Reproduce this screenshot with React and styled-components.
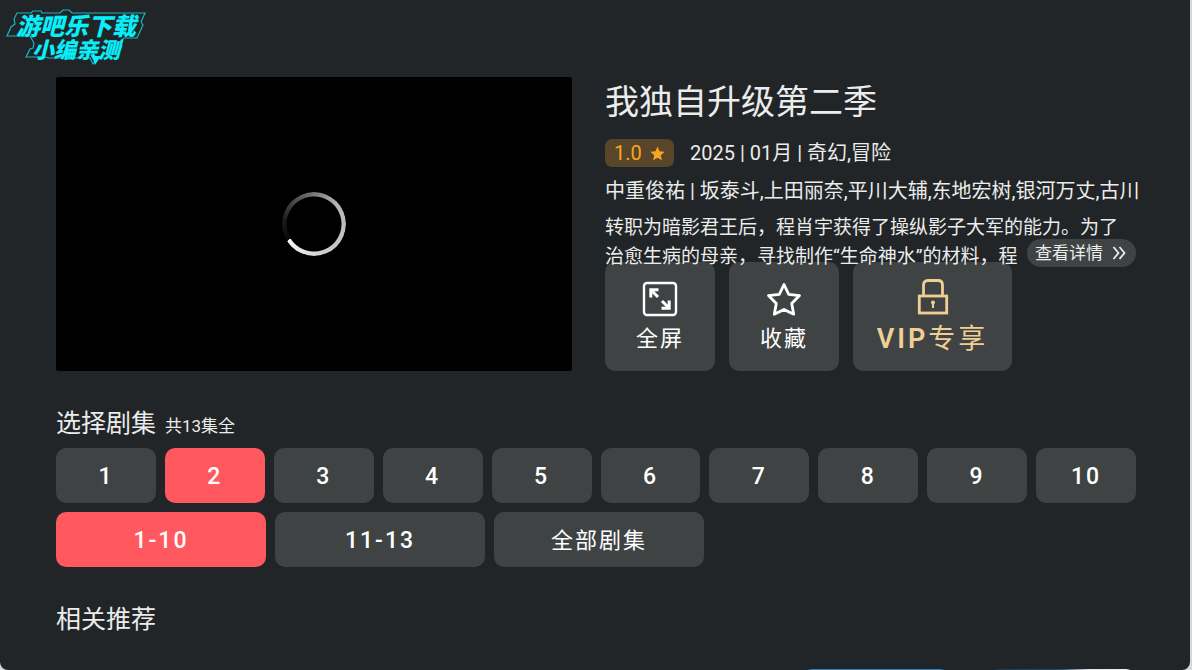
import React, { useState } from "react";
import styled, { createGlobalStyle, css } from "styled-components";

const GlobalStyle = createGlobalStyle`
  *, *::before, *::after { box-sizing: border-box; }
  body {
    margin: 0;
    background: #d5d8da;
    color: #ececec;
    font-family: Roboto, "Noto Sans CJK SC", sans-serif;
  }
  h1, h2, p { margin: 0; font-weight: 400; }
  button { font: inherit; color: inherit; border: 0; padding: 0; cursor: pointer; }
`;

const Screen = styled.main`
  position: relative;
  height: 100vh;
  margin-right: 2px;
  padding: 77px 54px 0 56px;
  overflow: auto;
  scrollbar-width: none;
  background: #212527;
  border-radius: 0 0 8px 8px;
`;

const Watermark = styled.div`
  position: absolute;
  top: 8px;
  left: 4px;
  width: 144px;
  height: 60px;
  padding-top: 5px;
  color: #08effa;
  font-family: "Noto Sans CJK SC", sans-serif;
  font-style: italic;
  font-weight: 900;
  text-align: center;
`;

const WatermarkFrame = styled.svg`
  position: absolute;
  inset: 0;
`;

const WatermarkLine = styled.div`
  position: relative;
  font-size: ${(p) => (p.$small ? 22 : 24)}px;
  line-height: ${(p) => (p.$small ? 22 : 24)}px;
`;

const Hero = styled.section`
  display: grid;
  grid-template-columns: minmax(0, 516fr) minmax(0, 531fr);
  gap: 33px;
`;

const Player = styled.div`
  display: grid;
  place-items: center;
  align-self: start;
  aspect-ratio: 516 / 294;
  background: #000;
  border-radius: 2px;
`;

const Spinner = styled.div`
  width: 64px;
  height: 64px;
  border-radius: 50%;
  background: conic-gradient(
    from 238deg,
    #080808 0deg,
    #1c1c1c 40deg,
    #6a6a6a 110deg,
    #b4b4b4 170deg,
    #cccccc 280deg,
    #f6f6f6 360deg
  );
  mask: radial-gradient(circle, transparent 27px, #000 28px);
`;

const Title = styled.h1`
  font-size: 34px;
  line-height: 50px;
  white-space: nowrap;
`;

const Meta = styled.div`
  display: flex;
  align-items: center;
  gap: 16px;
  margin-top: 12px;
  font-size: 20px;
  line-height: 28px;
`;

const Rating = styled.span`
  display: flex;
  align-items: center;
  justify-content: center;
  gap: 8px;
  width: 69px;
  height: 28px;
  border-radius: 7px;
  background: #58452a;
  color: #f8a523;
`;

const Cast = styled.p`
  margin-top: 10px;
  font-size: 20px;
  line-height: 28px;
  white-space: nowrap;
`;

const Summary = styled.div`
  position: relative;
  z-index: 1;
  margin-top: 8px;
`;

const SummaryText = styled.p`
  height: 58px;
  overflow: hidden;
  font-size: 19px;
  line-height: 29px;
`;

const DetailButton = styled.button`
  position: absolute;
  right: 0;
  bottom: 4px;
  display: flex;
  align-items: center;
  justify-content: center;
  gap: 9px;
  width: 109px;
  height: 28px;
  padding-right: 2px;
  border-radius: 14px;
  background: #404344;
  && { font-size: 17px; line-height: 28px; }
`;

const Actions = styled.div`
  display: flex;
  gap: 14px;
  margin-top: -9px;
`;

const ActionButton = styled.button`
  display: flex;
  flex-direction: column;
  align-items: center;
  gap: 2px;
  width: ${(p) => (p.$vip ? 159 : 110)}px;
  height: 109px;
  padding-top: ${(p) => (p.$vip ? 16 : 19)}px;
  border-radius: 10px;
  background: #404344;
  && {
    color: ${(p) => (p.$vip ? "#f0cf94" : "#fff")};
    font-size: ${(p) => (p.$vip ? 27 : 22)}px;
    line-height: 40px;
    letter-spacing: ${(p) => (p.$vip ? 3 : 2)}px;
  }
`;

const Latin = styled.span`
  font-weight: 600;
`;

const SectionHead = styled.div`
  display: flex;
  align-items: baseline;
  gap: 9px;
  margin-top: 35px;
  line-height: 36px;
`;

const SectionTitle = styled.h2`
  font-size: 25px;
`;

const Count = styled.span`
  font-size: 17px;
`;

const Episodes = styled.div`
  display: grid;
  grid-template-columns: repeat(10, minmax(0, 1fr));
  gap: 9px;
  margin-top: 4px;
`;

const Ranges = styled.div`
  display: flex;
  gap: 9px;
  margin-top: 9px;
`;

const choice = css`
  height: 55px;
  border-radius: 10px;
  background: ${(p) => (p.$active ? "#ff585f" : "#404344")};
  && {
    padding-top: 2px;
    color: #fff;
    font-size: ${(p) => (p.$wide ? 22 : 23)}px;
    font-weight: ${(p) => (p.$wide ? 400 : 500)};
    line-height: 50px;
    letter-spacing: 2px;
  }
`;

const EpisodeButton = styled.button`
  ${choice}
`;

const RangeButton = styled.button`
  ${choice}
  width: 210px;
`;

const Posters = styled.div`
  display: grid;
  grid-template-columns: repeat(6, minmax(0, 1fr));
  gap: 39px;
  margin-top: 31px;
`;

const Poster = styled.div`
  height: 200px;
  border-radius: 10px;
  background: ${(p) => p.$fill};
`;

const FullscreenIcon = () => (
  <svg width="36" height="36" viewBox="0 0 36 36" fill="none" stroke="currentColor" strokeWidth="2.4" aria-hidden="true">
    <rect x="2" y="2" width="32" height="32" rx="3" />
    <path d="M16 16 9 9M8.800 16.500V8.800H16.500" strokeWidth="3" />
    <path d="m20 20 7 7M27.200 19.500v7.700H19.500" strokeWidth="3" />
  </svg>
);

const FavoriteIcon = () => (
  <svg width="36" height="36" viewBox="0 0 36 36" fill="none" stroke="currentColor" strokeWidth="2.8" strokeLinejoin="round" aria-hidden="true">
    <path d="m18 3.500 4.700 9.800 10.800 1.300-7.800 7.800 2 10.800-9.700-4.800-9.700 4.800 2-10.800-7.800-7.800 10.800-1.300Z" />
  </svg>
);

const LockIcon = () => (
  <svg width="36" height="39" viewBox="0 0 36 39" fill="none" stroke="currentColor" strokeWidth="2.8" aria-hidden="true">
    <path d="M8.500 18V7q0-4.500 4.500-4.500h10q4.500 0 4.500 4.500v11" />
    <rect x="4.300" y="18" width="27.400" height="17" />
    <circle cx="18" cy="24.500" r="2" fill="currentColor" stroke="none" />
    <path d="M18 24v6" strokeWidth="2" />
  </svg>
);

const ChevronsIcon = () => (
  <svg width="14" height="14" viewBox="0 0 14 14" fill="none" stroke="currentColor" strokeWidth="1.800" aria-hidden="true">
    <path d="m1.500 1 5 6-5 6M7.500 1l5 6-5 6" />
  </svg>
);

const StarIcon = () => (
  <svg width="15" height="15" viewBox="0 0 24 24" fill="currentColor" aria-hidden="true">
    <path d="m12 .8 3.300 7.600 8.200.8-6.200 5.500 1.800 8.200-7.100-4.300-7.100 4.300 1.800-8.200L.5 9.200l8.200-.8Z" />
  </svg>
);

const EPISODES = Array.from({ length: 10 }, (_, i) => i + 1);
const RANGES = [
  { label: "1-10" },
  { label: "11-13" },
  { label: "全部剧集", wide: true },
];
const POSTERS = [
  "#212527",
  "#212527",
  "#212527",
  "#212527",
  "#2d7fbd",
  "linear-gradient(90deg, #1c3a52 0%, #2a5070 50%, #e4e4e4 68%, #f2f2f2 100%)",
];

export default function App() {
  const [episode, setEpisode] = useState(2);
  const [range, setRange] = useState("1-10");

  return (
    <>
      <GlobalStyle />
      <Screen>
        <Watermark>
          <WatermarkFrame width="144" height="60" viewBox="0 0 144 60" fill="none" stroke="#18b4c6" strokeWidth="1.2" aria-hidden="true">
            <path d="M13 5h14l2-2h8l1 2h18l3-3h6l3 3h73l-4 9 2 3-6 13h-13l-4 4 2 4-6 12h-18l-5 6-3-6H44l-2-1H22l4-8 3-1 1-5-4-7H3l4-9 4-3-1-5Z" />
            <path d="M88 48l3 9 6-9Z" fill="#08effa" stroke="none" />
          </WatermarkFrame>
          <WatermarkLine>游吧乐下载</WatermarkLine>
          <WatermarkLine $small>小编亲测</WatermarkLine>
        </Watermark>

        <Hero>
          <Player>
            <Spinner role="status" />
          </Player>
          <div>
            <Title>我独自升级第二季</Title>
            <Meta>
              <Rating>
                1.0
                <StarIcon />
              </Rating>
              <span>2025 | 01月 | 奇幻,冒险</span>
            </Meta>
            <Cast>中重俊祐 | 坂泰斗,上田丽奈,平川大辅,东地宏树,银河万丈,古川</Cast>
            <Summary>
              <SummaryText>
                转职为暗影君王后，程肖宇获得了操纵影子大军的能力。为了治愈生病的母亲，寻找制作“生命神水”的材料，程
              </SummaryText>
              <DetailButton type="button">
                查看详情
                <ChevronsIcon />
              </DetailButton>
            </Summary>
            <Actions>
              <ActionButton type="button">
                <FullscreenIcon />
                全屏
              </ActionButton>
              <ActionButton type="button">
                <FavoriteIcon />
                收藏
              </ActionButton>
              <ActionButton type="button" $vip>
                <LockIcon />
                <span>
                  <Latin>VIP</Latin>专享
                </span>
              </ActionButton>
            </Actions>
          </div>
        </Hero>

        <section>
          <SectionHead>
            <SectionTitle>选择剧集</SectionTitle>
            <Count>共13集全</Count>
          </SectionHead>
          <Episodes>
            {EPISODES.map((n) => (
              <EpisodeButton key={n} type="button" $active={n === episode} onClick={() => setEpisode(n)}>
                {n}
              </EpisodeButton>
            ))}
          </Episodes>
          <Ranges>
            {RANGES.map(({ label, wide }) => (
              <RangeButton key={label} type="button" $wide={wide} $active={label === range} onClick={() => setRange(label)}>
                {label}
              </RangeButton>
            ))}
          </Ranges>
        </section>

        <section>
          <SectionHead>
            <SectionTitle>相关推荐</SectionTitle>
          </SectionHead>
          <Posters>
            {POSTERS.map((fill, i) => (
              <Poster key={i} $fill={fill} />
            ))}
          </Posters>
        </section>
      </Screen>
    </>
  );
}
